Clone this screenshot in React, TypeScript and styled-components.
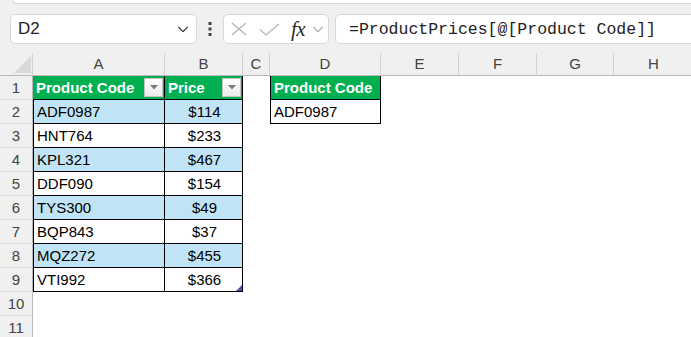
import React from "react";
import styled, { createGlobalStyle } from "styled-components";

const GlobalStyle = createGlobalStyle`
    html, body {
        margin: 0;
        padding: 0;
        background: #fff;
    }
    * {
        box-sizing: border-box;
    }
`;

const GREEN = '#00b050';
const BAND = '#c0e4f5';
const HEAD_BG = '#f0f0f0';

// row header, then A..H
const colWidths = [33, 132, 78, 27, 111, 78, 78, 77, 80];
const colNames = ['A', 'B', 'C', 'D', 'E', 'F', 'G', 'H'];

const products = [
    ['ADF0987', '$114'],
    ['HNT764', '$233'],
    ['KPL321', '$467'],
    ['DDF090', '$154'],
    ['TYS300', '$49'],
    ['BQP843', '$37'],
    ['MQZ272', '$455'],
    ['VTI992', '$366'],
];

const Page = styled.div`
    width: 691px;
    height: 337px;
    overflow: hidden;
    display: flex;
    flex-direction: column;
    font-family: "Liberation Sans", Arial, sans-serif;
`;

const Top = styled.div`
    background: ${HEAD_BG};
    display: flex;
    flex-direction: column;
`;

const RibbonEdge = styled.div`
    height: 4px;
    margin-left: 12px;
    background: #fff;
    border-left: 1px solid #d6d6d6;
    border-bottom: 1px solid #d6d6d6;
    border-bottom-left-radius: 6px;
`;

const FormulaBar = styled.div`
    display: flex;
    align-items: center;
    padding: 10px 0 9px 10px;
    height: 49px;
`;

const Box = styled.div`
    height: 30px;
    background: #fff;
    border: 1px solid #d8d8d8;
    border-radius: 5px;
    display: flex;
    align-items: center;
`;

const NameBox = styled(Box)`
    width: 187px;
    padding: 0 7px 0 7px;
    justify-content: space-between;
    font-size: 17px;
    color: #222;
`;

const Dots = styled.div`
    width: 26px;
    display: flex;
    justify-content: center;
`;

const FxBox = styled(Box)`
    width: 106px;
    padding: 0 2px 0 7px;
`;

const Fx = styled.span`
    font-family: "Liberation Serif", "Times New Roman", serif;
    font-style: italic;
    font-size: 21px;
    color: #2b2b2b;
    margin-left: 11px;
    letter-spacing: -0.5px;
`;

const FxChevron = styled.span`
    margin-left: 7px;
    display: flex;
`;

const FormulaBox = styled(Box)`
    flex: 1;
    margin-left: 6px;
    margin-right: -8px;
    padding-left: 13px;
    font-family: "Liberation Mono", "Courier New", monospace;
    font-size: 16.5px;
    color: #222;
`;

const Sheet = styled.div`
    display: grid;
    grid-template-columns: ${colWidths.map((w) => w + 'px').join(' ')};
    grid-template-rows: 23px repeat(11, 24px);
`;

const ColHead = styled.div<{ $corner?: boolean }>`
    background: ${HEAD_BG};
    border-right: 1px solid #d2d2d2;
    border-bottom: 1px solid #b8b8b8;
    display: flex;
    align-items: ${(p) => (p.$corner ? 'flex-end' : 'center')};
    justify-content: ${(p) => (p.$corner ? 'flex-end' : 'center')};
    padding: ${(p) => (p.$corner ? '0 1px 2px 0' : '0 0 1px 0')};
    font-size: 15px;
    color: #444;
`;

const RowHead = styled.div`
    background: ${HEAD_BG};
    border-right: 1px solid #b8b8b8;
    border-bottom: 1px solid #d8d8d8;
    display: flex;
    align-items: center;
    justify-content: center;
    font-size: 15px;
    color: #444;
`;

// gridlines are switched off, so only table cells draw borders
const Cell = styled.div<{
    $bg?: string;
    $head?: boolean;
    $align?: string;
    $table?: boolean;
    $left?: boolean;
}>`
    position: relative;
    background: ${(p) => p.$bg || '#fff'};
    border-right: 1px solid ${(p) => (p.$table ? '#000' : 'transparent')};
    border-bottom: 1px solid ${(p) => (p.$table ? '#000' : 'transparent')};
    border-left: ${(p) => (p.$left ? '1px solid #000' : 'none')};
    display: flex;
    align-items: center;
    justify-content: ${(p) => p.$align || 'flex-start'};
    padding: 0 1px 0 3px;
    font-size: 15px;
    font-weight: ${(p) => (p.$head ? 700 : 400)};
    color: ${(p) => (p.$head ? '#fff' : '#000')};
    white-space: nowrap;
`;

const HeadText = styled.span`
    flex: 1;
`;

const FilterButton = styled.div`
    width: 19px;
    height: 19px;
    border: 1px solid #c4c4c4;
    background: linear-gradient(#ffffff, #ececec);
    display: flex;
    align-items: center;
    justify-content: center;
`;

const ResizeHandle = styled.svg`
    position: absolute;
    right: 0;
    bottom: 0;
`;

const Chevron = ({ color, size }: { color: string; size: number }) => (
    <svg width={size} height={size * 0.55} viewBox="0 0 12 7">
        <polyline points="1,1 6,6 11,1" fill="none" stroke={color} strokeWidth="1.3" />
    </svg>
);

const FilterArrow = () => (
    <svg width="8" height="5" viewBox="0 0 8 5">
        <polygon points="0,0 8,0 4,4.5" fill="#7a7a7a" />
    </svg>
);

const HeaderCell = ({ label }: { label: string }) => (
    <>
        <HeadText>{label}</HeadText>
        <FilterButton>
            <FilterArrow />
        </FilterButton>
    </>
);

function renderCell(row: number, col: number) {
    const key = `${row}-${col}`;
    // columns A and B hold the product table
    if (row <= 9 && (col === 0 || col === 1)) {
        if (row === 1) {
            return (
                <Cell key={key} $bg={GREEN} $head $table>
                    <HeaderCell label={col === 0 ? 'Product Code' : 'Price'} />
                </Cell>
            );
        }
        const item = products[row - 2];
        const bg = row % 2 === 0 ? BAND : '#fff';
        return (
            <Cell key={key} $bg={bg} $table $left={col === 0} $align={col === 1 ? 'center' : 'flex-start'}>
                {item[col]}
                {row === 9 && col === 1 && (
                    <ResizeHandle width="6" height="6" viewBox="0 0 6 6">
                        <polygon points="6,0 6,6 0,6" fill="#3f51b5" />
                    </ResizeHandle>
                )}
            </Cell>
        );
    }
    // column D holds the lookup result
    if (col === 3 && row <= 2) {
        if (row === 1) {
            return (
                <Cell key={key} $bg={GREEN} $head $table $left>
                    Product Code
                </Cell>
            );
        }
        return (
            <Cell key={key} $table $left>
                ADF0987
            </Cell>
        );
    }
    return <Cell key={key} />;
}

export default function App() {
    const rowNums = Array.from({ length: 11 }, (_, i) => i + 1);
    return (
        <Page>
            <GlobalStyle />
            <Top>
                <RibbonEdge />
                <FormulaBar>
                    <NameBox>
                        <span>D2</span>
                        <Chevron color="#333" size={12} />
                    </NameBox>
                    <Dots>
                        <svg width="4" height="14" viewBox="0 0 4 14">
                            <rect x="0.5" y="0" width="3" height="3" fill="#444" />
                            <rect x="0.5" y="5.5" width="3" height="3" fill="#444" />
                            <rect x="0.5" y="11" width="3" height="3" fill="#444" />
                        </svg>
                    </Dots>
                    <FxBox>
                        <svg width="16" height="14" viewBox="0 0 16 14">
                            <line x1="1" y1="1" x2="15" y2="13" stroke="#b4b4b4" strokeWidth="1.3" />
                            <line x1="15" y1="1" x2="1" y2="13" stroke="#b4b4b4" strokeWidth="1.3" />
                        </svg>
                        <svg width="21" height="13" viewBox="0 0 21 13" style={{ marginLeft: 12 }}>
                            <polyline points="1,6.5 7,12 20,1" fill="none" stroke="#b4b4b4" strokeWidth="1.3" />
                        </svg>
                        <Fx>fx</Fx>
                        <FxChevron>
                            <Chevron color="#a8a8a8" size={12} />
                        </FxChevron>
                    </FxBox>
                    <FormulaBox>=ProductPrices[@[Product Code]]</FormulaBox>
                </FormulaBar>
            </Top>
            <Sheet>
                <ColHead $corner>
                    <svg width="17" height="17" viewBox="0 0 17 17">
                        <polygon points="17,0 17,17 0,17" fill="#d9d9d9" />
                    </svg>
                </ColHead>
                {colNames.map((c) => (
                    <ColHead key={c}>{c}</ColHead>
                ))}
                {rowNums.map((r) => (
                    <React.Fragment key={r}>
                        <RowHead>{r}</RowHead>
                        {colNames.map((_, ci) => renderCell(r, ci))}
                    </React.Fragment>
                ))}
            </Sheet>
        </Page>
    );
}
